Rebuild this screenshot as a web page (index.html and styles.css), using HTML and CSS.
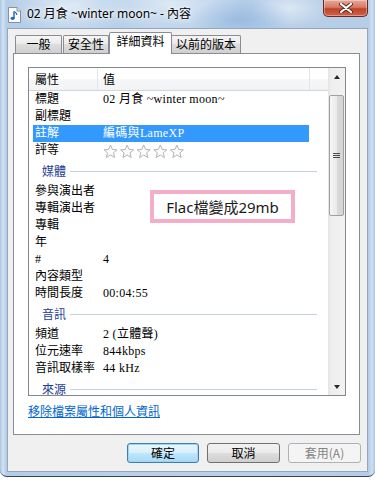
FILE: index.html
```html
<!DOCTYPE html>
<html lang="zh-Hant">
<head>
<meta charset="utf-8">
<title>內容</title>
<link rel="stylesheet" href="styles.css">
</head>
<body>
<div class="window">
  <div class="titlebar">
    <svg class="ticon" width="13" height="16" viewBox="0 0 13 16">
      <path d="M0.5 0.5 H9 L12.5 4 V15.5 H0.5 Z" fill="#fdfdfd" stroke="#8a9099"/>
      <path d="M9 0.5 V4 H12.5" fill="#e4e7ea" stroke="#8a9099"/>
      <path d="M6 4.5 V11" stroke="#1f63c6" stroke-width="1.4"/>
      <path d="M6 4.5 Q8.5 5.5 9 8" stroke="#1f63c6" stroke-width="1.2" fill="none"/>
      <ellipse cx="4.6" cy="11.3" rx="2" ry="1.6" fill="#1f63c6"/>
    </svg>
    <span class="title">02 月食 ~winter moon~ - 內容</span>
    <div class="close">
      <svg width="14" height="10" viewBox="0 0 14 10">
        <path d="M2 1 L12 9 M12 1 L2 9" stroke="#5a2a22" stroke-width="4" stroke-linecap="round"/>
        <path d="M2 1 L12 9 M12 1 L2 9" stroke="#ffffff" stroke-width="2.2" stroke-linecap="round"/>
      </svg>
    </div>
  </div>
  <div class="client">
    <div class="tabs">
      <div class="tab t1">一般</div>
      <div class="tab t2">安全性</div>
      <div class="tab t3 active">詳細資料</div>
      <div class="tab t4">以前的版本</div>
    </div>
    <div class="panel">
      <div class="listbox">
        <div class="list">
          <div class="header">
            <div class="hc hname">屬性</div>
            <div class="hc hval">值</div>
            <div class="hc hrest"></div>
          </div>
          <div class="row"><span class="name">標題</span><span class="val">02 月食 ~winter moon~</span></div>
          <div class="row"><span class="name">副標題</span><span class="val"></span></div>
          <div class="row selected"><span class="name">註解</span><span class="val">編碼與LameXP</span></div>
          <div class="row"><span class="name">評等</span><span class="val">
            <svg class="stars" width="86" height="15" viewBox="0 0 86 15">
              <g fill="#fbfbfb" stroke="#b4b4b4" stroke-width="1" stroke-linejoin="round">
                <polygon points="7.5,1 9.4,5.4 14,5.8 10.5,8.8 11.6,13.5 7.5,11 3.4,13.5 4.5,8.8 1,5.8 5.6,5.4"/>
                <polygon transform="translate(16.6 0)" points="7.5,1 9.4,5.4 14,5.8 10.5,8.8 11.6,13.5 7.5,11 3.4,13.5 4.5,8.8 1,5.8 5.6,5.4"/>
                <polygon transform="translate(33.2 0)" points="7.5,1 9.4,5.4 14,5.8 10.5,8.8 11.6,13.5 7.5,11 3.4,13.5 4.5,8.8 1,5.8 5.6,5.4"/>
                <polygon transform="translate(49.8 0)" points="7.5,1 9.4,5.4 14,5.8 10.5,8.8 11.6,13.5 7.5,11 3.4,13.5 4.5,8.8 1,5.8 5.6,5.4"/>
                <polygon transform="translate(66.4 0)" points="7.5,1 9.4,5.4 14,5.8 10.5,8.8 11.6,13.5 7.5,11 3.4,13.5 4.5,8.8 1,5.8 5.6,5.4"/>
              </g>
            </svg></span></div>
          <div class="group"><span class="gtext">媒體</span><span class="gline"></span></div>
          <div class="row"><span class="name">參與演出者</span><span class="val"></span></div>
          <div class="row"><span class="name">專輯演出者</span><span class="val"></span></div>
          <div class="row"><span class="name">專輯</span><span class="val"></span></div>
          <div class="row"><span class="name">年</span><span class="val"></span></div>
          <div class="row"><span class="name">#</span><span class="val">4</span></div>
          <div class="row"><span class="name">內容類型</span><span class="val"></span></div>
          <div class="row"><span class="name">時間長度</span><span class="val">00:04:55</span></div>
          <div class="group"><span class="gtext">音訊</span><span class="gline"></span></div>
          <div class="row"><span class="name">頻道</span><span class="val">2 (立體聲)</span></div>
          <div class="row"><span class="name">位元速率</span><span class="val">844kbps</span></div>
          <div class="row"><span class="name">音訊取樣率</span><span class="val">44 kHz</span></div>
          <div class="group"><span class="gtext">來源</span><span class="gline"></span></div>
        </div>
        <div class="scrollbar">
          <div class="sbtn"><span class="arrow up"></span></div>
          <div class="sgap"></div>
          <div class="thumb"><span class="grip"></span></div>
          <div class="strack"></div>
          <div class="sbtn"><span class="arrow down"></span></div>
        </div>
      </div>
      <a class="link" href="#">移除檔案屬性和個人資訊</a>
    </div>
    <div class="buttons">
      <div class="btn default b1">確定</div>
      <div class="btn b2">取消</div>
      <div class="btn disabled b3">套用(A)</div>
    </div>
  </div>
</div>
<div class="note">Flac檔變成29mb</div>
</body>
</html>
```
FILE: styles.css
```css
html, body {
  margin: 0;
  padding: 0;
}
body {
  width: 375px;
  height: 480px;
  overflow: hidden;
  background: #ffffff;
  position: relative;
  font-family: "Noto Sans", "Noto Sans CJK TC", sans-serif;
  font-size: 12px;
  color: #000;
}
.window {
  height: 477px;
  box-sizing: border-box;
  display: flex;
  flex-direction: column;
  border-bottom: 1px solid #3b4552;
  border-radius: 0 0 7px 7px;
  background:
    radial-gradient(ellipse 60px 30px at 70px 6px, rgba(255,255,255,0.55), rgba(255,255,255,0) 100%),
    radial-gradient(ellipse 50px 22px at 240px 20px, rgba(120,165,215,0.45), rgba(120,165,215,0) 100%),
    radial-gradient(ellipse 70px 30px at 170px 4px, rgba(255,255,255,0.5), rgba(255,255,255,0) 100%),
    radial-gradient(ellipse 40px 20px at 290px 8px, rgba(255,255,255,0.5), rgba(255,255,255,0) 100%),
    linear-gradient(to right, #aac6e3 0px, #d3e3f3 3px, #b5cee8 6px, #b9d1ea 50%, #b5cde7 369px, #d0e1f2 372px, #aac4e0 375px);
}
.titlebar {
  height: 28px;
  flex: none;
  display: flex;
  align-items: center;
  padding-left: 8px;
}
.ticon {
  flex: none;
  margin-top: 1px;
}
.title {
  margin-left: 6px;
  font-size: 12px;
  line-height: 16px;
  color: #000;
  text-shadow: 0 0 6px rgba(255,255,255,0.9), 0 0 3px rgba(255,255,255,0.9);
  white-space: pre;
}
.close {
  margin-left: auto;
  margin-right: 7px;
  align-self: flex-start;
  width: 45px;
  height: 17px;
  box-sizing: border-box;
  border: 1px solid #6b2a20;
  border-top: none;
  border-radius: 0 0 5px 5px;
  background: linear-gradient(to bottom, #e9a99a 0%, #d77a66 45%, #c2412a 55%, #d0624b 100%);
  box-shadow: inset 0 0 0 1px rgba(255,255,255,0.35);
  display: flex;
  align-items: center;
  justify-content: center;
}
.client {
  flex: none;
  height: 444px;
  margin: 0 7px;
  box-sizing: border-box;
  border: 1px solid #97a6b8;
  background: #f0f0f0;
  display: flex;
  flex-direction: column;
}
.tabs {
  display: flex;
  align-items: flex-end;
  height: 21px;
  margin-top: 3px;
  margin-left: 7px;
  position: relative;
  z-index: 2;
}
.tab {
  height: 18px;
  box-sizing: border-box;
  border: 1px solid #898c95;
  border-bottom: none;
  border-radius: 2px 2px 0 0;
  background: linear-gradient(to bottom, #f5f5f5 0%, #ebebeb 45%, #dddddd 50%, #cfcfcf 100%);
  display: flex;
  align-items: center;
  justify-content: center;
  font-size: 12px;
  line-height: 16px;
  padding-top: 1px;
}
.t1 { width: 47px; }
.t2 { width: 46px; margin-left: 1px; }
.t3 { width: 63px; }
.t4 { width: 70px; margin-left: -1px; }
.tab.active {
  height: 22px;
  margin-bottom: -1px;
  background: #ffffff;
  position: relative;
  z-index: 3;
  padding-top: 0;
  padding-bottom: 3px;
}
.panel {
  margin-left: 5px;
  width: 347px;
  height: 382px;
  box-sizing: border-box;
  border: 1px solid #898c95;
  background: #ffffff;
  padding: 13px 0 0 14px;
  display: flex;
  flex-direction: column;
  position: relative;
  z-index: 1;
}
.listbox {
  width: 318px;
  height: 329px;
  box-sizing: border-box;
  border: 1px solid #828790;
  display: flex;
  background: #fff;
}
.list {
  flex: 1;
  overflow: hidden;
  font-family: "Liberation Serif", "Noto Sans CJK TC", serif;
  font-size: 12px;
}
.header {
  display: flex;
  height: 23px;
  box-sizing: border-box;
  border-bottom: 1px solid #d5d5d5;
  background: linear-gradient(to bottom, #ffffff 0%, #ffffff 50%, #f6f7f8 51%, #f2f3f4 100%);
  font-family: "Noto Sans CJK TC", sans-serif;
}
.hc {
  height: 22px;
  box-sizing: border-box;
  border-right: 1px solid #e3e4e6;
  line-height: 22px;
}
.hname { width: 69px; padding-left: 6px; }
.hval { width: 212px; padding-left: 5px; }
.hrest { flex: 1; border-right: none; }
.row {
  display: flex;
  height: 17px;
  line-height: 17px;
  margin-left: 4px;
  width: 276px;
  white-space: nowrap;
}
.row .name {
  width: 64px;
  padding-left: 2px;
  box-sizing: border-box;
  flex: none;
}
.row .val {
  padding-left: 6px;
  display: flex;
  align-items: center;
  letter-spacing: 0.3px;
}
.row.selected {
  background: #3399ff;
  color: #ffffff;
}
.stars {
  display: block;
  margin-top: 1px;
}
.group {
  display: flex;
  align-items: center;
  height: 24px;
  margin-left: 4px;
  width: 284px;
}
.gtext {
  padding-left: 9px;
  color: #1e3d96;
  font-family: "Noto Sans CJK TC", sans-serif;
  line-height: 16px;
}
.gline {
  flex: 1;
  height: 1px;
  background: #c5cfe2;
  margin-left: 4px;
}
.scrollbar {
  width: 17px;
  flex: none;
  display: flex;
  flex-direction: column;
  background: linear-gradient(to right, #e2e2e2 0px, #eeeeee 1px, #f2f2f2 100%);
  border-left: 1px solid #e6e6e6;
  box-sizing: border-box;
}
.sbtn {
  height: 17px;
  flex: none;
  display: flex;
  align-items: center;
  justify-content: center;
}
.arrow {
  width: 0;
  height: 0;
  border-left: 3.5px solid transparent;
  border-right: 3.5px solid transparent;
}
.arrow.up { border-bottom: 4px solid #2a2a2a; }
.arrow.down { border-top: 4px solid #2a2a2a; }
.sgap { height: 10px; flex: none; }
.thumb {
  height: 121px;
  flex: none;
  margin: 0 1px 0 0;
  box-sizing: border-box;
  border: 1px solid #a0a0a0;
  border-radius: 2px;
  background: linear-gradient(to right, #f6f6f6 0%, #eaeaea 50%, #d9d9d9 55%, #d4d4d4 100%);
  display: flex;
  align-items: center;
  justify-content: center;
}
.grip {
  width: 7px;
  height: 5px;
  background: linear-gradient(to bottom, #4a4a4a 0, #4a4a4a 1px, transparent 1px, transparent 2px, #4a4a4a 2px, #4a4a4a 3px, transparent 3px, transparent 4px, #4a4a4a 4px, #4a4a4a 5px);
}
.strack { flex: 1; }
.link {
  margin-top: 7px;
  align-self: flex-start;
  color: #0066cc;
  text-decoration: underline;
  font-family: "Noto Sans CJK TC", sans-serif;
  font-size: 12px;
  line-height: 15px;
}
.buttons {
  display: flex;
  justify-content: flex-end;
  gap: 8px;
  margin-top: 8px;
  padding-right: 6px;
}
.btn {
  height: 20px;
  box-sizing: border-box;
  border: 1px solid #707070;
  border-radius: 3px;
  background: linear-gradient(to bottom, #f2f2f2 0%, #ebebeb 48%, #dddddd 52%, #cfcfcf 100%);
  display: flex;
  align-items: center;
  justify-content: center;
  font-family: "Noto Sans CJK TC", sans-serif;
  font-size: 12px;
  line-height: 16px;
}
.b1 { width: 72px; }
.b2 { width: 73px; }
.b3 { width: 73px; }
.btn.default {
  border-color: #3c7fb1;
  background: linear-gradient(to bottom, #eaf6fd 0%, #d9f0fc 48%, #bee6fd 52%, #a7d9f5 100%);
  box-shadow: inset 0 0 0 1px #9fd4f2;
}
.btn.disabled {
  border-color: #adb2b5;
  background: #f4f4f4;
  color: #838383;
}
.note {
  position: absolute;
  z-index: 10;
  left: 150px;
  top: 190px;
  width: 145px;
  height: 33px;
  box-sizing: border-box;
  border: 4px solid #f5aec8;
  background: #ffffff;
  display: flex;
  align-items: center;
  justify-content: center;
  font-family: "Noto Sans", "Noto Sans CJK TC", sans-serif;
  font-size: 15px;
  color: #1a1a1a;
  line-height: 20px;
}
```
